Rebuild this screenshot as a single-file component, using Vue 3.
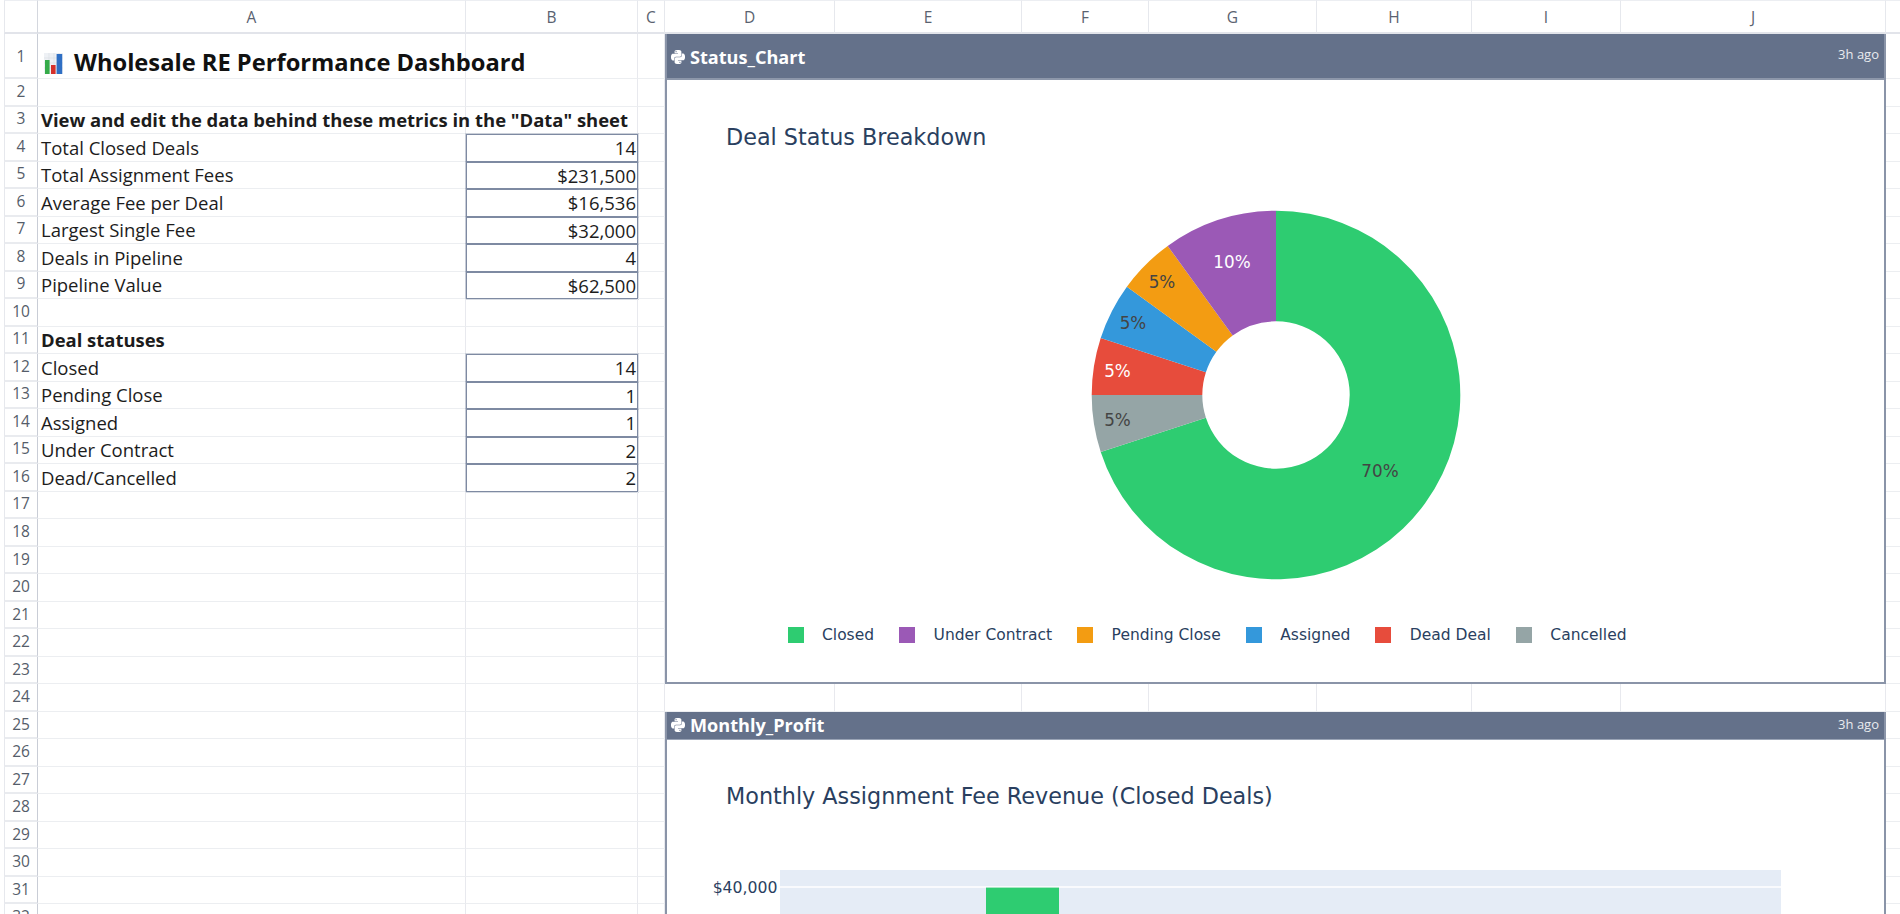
<script setup>
const columns = ['A', 'B', 'C', 'D', 'E', 'F', 'G', 'H', 'I', 'J']

const content = {
  1: { a: 'Wholesale RE Performance Dashboard', kind: 'title' },
  3: { a: 'View and edit the data behind these metrics in the "Data" sheet', kind: 'bold' },
  4: { a: 'Total Closed Deals', b: '14' },
  5: { a: 'Total Assignment Fees', b: '$231,500' },
  6: { a: 'Average Fee per Deal', b: '$16,536' },
  7: { a: 'Largest Single Fee', b: '$32,000' },
  8: { a: 'Deals in Pipeline', b: '4' },
  9: { a: 'Pipeline Value', b: '$62,500' },
  11: { a: 'Deal statuses', kind: 'bold' },
  12: { a: 'Closed', b: '14' },
  13: { a: 'Pending Close', b: '1' },
  14: { a: 'Assigned', b: '1' },
  15: { a: 'Under Contract', b: '2' },
  16: { a: 'Dead/Cancelled', b: '2' },
}

// Columns D-J are covered by the widgets except on row 24, the gap between them.
const rows = Array.from({ length: 33 }, (_, i) => ({
  n: i + 1,
  free: i + 1 === 24 ? 8 : 1,
  ...(content[i + 1] || {}),
}))

const R = 184.3
const r = 73.7
const C = 186

function point(radius, frac) {
  const t = frac * Math.PI * 2
  return `${(C + radius * Math.sin(t)).toFixed(2)} ${(C - radius * Math.cos(t)).toFixed(2)}`
}

const sliceData = [
  { v: 0.7, color: '#2ecc71' },
  { v: 0.05, color: '#95a5a6' },
  { v: 0.05, color: '#e74c3c' },
  { v: 0.05, color: '#3498db' },
  { v: 0.05, color: '#f39c12' },
  { v: 0.1, color: '#9b59b6' },
]

let acc = 0
const slices = sliceData.map((s) => {
  const a = acc
  const b = acc + s.v
  acc = b
  const large = s.v > 0.5 ? 1 : 0
  return {
    color: s.color,
    d: `M${point(R, a)} A${R} ${R} 0 ${large} 1 ${point(R, b)} L${point(r, b)} A${r} ${r} 0 ${large} 0 ${point(r, a)} Z`,
  }
})

// label positions are relative to the donut box (centre = 186,186 at page 1275,395)
const pieLabels = [
  { t: '70%', x: 290, y: 262, fill: '#444444' },
  { t: '5%', x: 27.5, y: 211, fill: '#444444' },
  { t: '5%', x: 27.5, y: 162, fill: '#ffffff' },
  { t: '5%', x: 43, y: 114, fill: '#444444' },
  { t: '5%', x: 72, y: 73, fill: '#444444' },
  { t: '10%', x: 142, y: 53, fill: '#ffffff' },
]

const legend = [
  { t: 'Closed', c: '#2ecc71' },
  { t: 'Under Contract', c: '#9b59b6' },
  { t: 'Pending Close', c: '#f39c12' },
  { t: 'Assigned', c: '#3498db' },
  { t: 'Dead Deal', c: '#e74c3c' },
  { t: 'Cancelled', c: '#95a5a6' },
]

const pythonPath = 'M14.25.18l.9.2.73.26.59.3.45.32.34.34.25.34.16.33.1.3.04.26.02.2-.01.13V8.5l-.05.63-.13.55-.21.46-.26.38-.3.31-.33.25-.35.19-.35.14-.33.1-.3.07-.26.04-.21.02H8.77l-.69.05-.59.14-.5.22-.41.27-.33.32-.27.35-.2.36-.15.37-.1.35-.07.32-.04.27-.02.21v3.06H3.17l-.21-.03-.28-.07-.32-.12-.35-.18-.36-.26-.36-.36-.35-.46-.32-.59-.28-.73-.21-.88-.14-1.05-.05-1.23.06-1.22.16-1.04.24-.87.32-.71.36-.57.4-.44.42-.33.42-.24.4-.16.36-.1.32-.05.24-.01h.16l.06.01h8.16v-.83H6.18l-.01-2.75-.02-.37.05-.34.11-.31.17-.28.25-.26.31-.23.38-.2.44-.18.51-.15.58-.12.64-.1.71-.06.77-.04.84-.02 1.27.05zm-6.3 1.98l-.23.33-.08.41.08.41.23.34.33.22.41.09.41-.09.33-.22.23-.34.08-.41-.08-.41-.23-.33-.33-.22-.41-.09-.41.09zm13.09 3.95l.28.06.32.12.35.18.36.27.36.35.35.47.32.59.28.73.21.88.14 1.04.05 1.23-.06 1.23-.16 1.04-.24.86-.32.71-.36.57-.4.45-.42.33-.42.24-.4.16-.36.09-.32.05-.24.02-.16-.01h-8.22v.82h5.84l.01 2.76.02.36-.05.34-.11.31-.17.29-.25.25-.31.24-.38.2-.44.17-.51.15-.58.13-.64.09-.71.07-.77.04-.84.01-1.27-.04-1.07-.14-.9-.2-.73-.25-.59-.3-.45-.33-.34-.34-.25-.34-.16-.33-.1-.3-.04-.25-.02-.2.01-.13v-5.34l.05-.64.13-.54.21-.46.26-.38.3-.32.33-.24.35-.2.35-.14.33-.1.3-.06.26-.04.21-.02.13-.01h5.84l.69-.05.59-.14.5-.21.41-.28.33-.32.27-.35.2-.36.15-.36.1-.35.07-.32.04-.28.02-.21V6.07h2.09l.14.01zm-6.47 14.25l-.23.33-.08.41.08.41.23.33.33.23.41.08.41-.08.33-.23.23-.33.08-.41-.08-.41-.23-.33-.33-.23-.41-.08-.41.08z'
</script>

<template>
  <div class="sheet">
    <!-- Widgets come first in the grid's placement: auto-placed cells flow around them -->
    <section class="widget widget-status">
      <header class="widget-head head-tall">
        <div class="widget-name">
          <svg class="py" viewBox="0 0 24 24" width="14" height="14"><path :d="pythonPath" fill="#fff" fill-rule="evenodd" /></svg>
          <span>Status_Chart</span>
        </div>
        <span class="ago">3h ago</span>
      </header>
      <div class="widget-body">
        <h2 class="chart-title status-title">Deal Status Breakdown</h2>
        <svg class="donut" viewBox="0 0 372 372" width="372" height="372">
          <path v-for="s in slices" :key="s.color" :d="s.d" :fill="s.color" />
          <text
            v-for="l in pieLabels"
            :key="l.x"
            :x="l.x"
            :y="l.y"
            :fill="l.fill"
            class="pie-label"
            text-anchor="middle"
            dominant-baseline="central"
          >{{ l.t }}</text>
        </svg>
        <div class="legend">
          <div v-for="l in legend" :key="l.t" class="legend-item">
            <i class="swatch" :style="{ background: l.c }"></i>
            <span>{{ l.t }}</span>
          </div>
        </div>
      </div>
    </section>

    <section class="widget widget-profit">
      <header class="widget-head head-short">
        <div class="widget-name">
          <svg class="py" viewBox="0 0 24 24" width="14" height="14"><path :d="pythonPath" fill="#fff" fill-rule="evenodd" /></svg>
          <span>Monthly_Profit</span>
        </div>
        <span class="ago">3h ago</span>
      </header>
      <div class="widget-body">
        <h2 class="chart-title profit-title">Monthly Assignment Fee Revenue (Closed Deals)</h2>
        <svg class="bars" viewBox="0 0 1216 60" width="1216" height="60">
          <rect x="113" y="0" width="1001" height="60" fill="#e5ecf6" />
          <line x1="113" x2="1114" y1="17" y2="17" stroke="#ffffff" stroke-width="1.5" />
          <rect x="319" y="17.6" width="73" height="42.4" fill="#2ecc71" />
          <text x="110.5" y="17" class="axis" text-anchor="end" dominant-baseline="central">$40,000</text>
        </svg>
      </div>
    </section>

    <!-- column header row -->
    <div class="margin"></div>
    <div class="corner"></div>
    <div v-for="c in columns" :key="c" class="col-head">{{ c }}</div>
    <div class="edge head-edge"></div>

    <!-- data rows -->
    <template v-for="row in rows" :key="row.n">
      <div class="margin"></div>
      <div class="row-head" :class="{ 'row-head-first': row.n === 1 }">{{ row.n }}</div>
      <div class="cell" :class="row.kind">
        <svg v-if="row.kind === 'title'" class="chart-emoji" viewBox="0 0 19 21" width="19" height="21">
          <rect x="0" y="0" width="19" height="21" fill="#eef1f5" />
          <path d="M0 5h19M0 10h19M0 15h19M5 0v21M10 0v21M15 0v21" stroke="#d9dde3" stroke-width="0.6" />
          <rect x="1" y="7" width="4.6" height="14" fill="#35ab4a" />
          <rect x="7" y="12" width="4.6" height="9" fill="#d5302b" />
          <rect x="12.6" y="1" width="5.6" height="20" fill="#2f6fc4" />
        </svg>
        <span>{{ row.a }}</span>
      </div>
      <div class="cell" :class="{ val: row.b }">{{ row.b }}</div>
      <div v-for="c in row.free" :key="c" class="cell"></div>
      <div class="edge"></div>
    </template>
  </div>
</template>

<style scoped>
.sheet {
  display: grid;
  grid-template-columns: 4px 34px 428px 172px 27px 170px 187px 127px 168px 155px 149px 265px 14px;
  grid-template-rows: 34px 45px repeat(32, 27.53px);
  width: 1900px;
  height: 914px;
  overflow: hidden;
  background: #fff;
  font-family: "Open Sans", "Noto Sans", sans-serif;
  color: #1c1c1c;
}

.margin {
  background: #fff;
}

.corner,
.col-head {
  display: flex;
  align-items: center;
  justify-content: center;
  border-top: 1px solid #eceef2;
  border-right: 1px solid #e6e8ed;
  border-bottom: 2px solid #e2e4ea;
  font-size: 15.5px;
  color: #5a6270;
}

.corner {
  border-left: 1px solid #e6e8ed;
  border-right: 1px solid #d4d7de;
}

.row-head {
  display: flex;
  align-items: center;
  justify-content: center;
  padding-bottom: 2px;
  border-left: 1px solid #e6e8ed;
  border-right: 1px solid #c9cdd6;
  border-bottom: 2px solid #e9ebef;
  font-size: 15.5px;
  color: #555d6a;
}

.row-head-first {
  padding-bottom: 0;
}

.cell {
  display: flex;
  align-items: center;
  min-width: 0;
  padding: 0 3px 0 3px;
  border-right: 1px solid #e8e9ee;
  border-bottom: 1px solid #eceef1;
  font-size: 18.5px;
  white-space: nowrap;
}

.edge {
  border-bottom: 1px solid #eceef1;
}

.head-edge {
  border-top: 1px solid #eceef2;
  border-bottom: 2px solid #e2e4ea;
}

.bold {
  font-weight: 700;
  font-size: 18.45px;
}

.title {
  align-items: flex-end;
  padding-left: 6px;
  padding-bottom: 0;
  gap: 11px;
  font-size: 23.7px;
  font-weight: 700;
  color: #111;
}

.chart-emoji {
  flex: none;
  margin-bottom: 4px;
}

.val {
  justify-content: flex-end;
  padding-right: 1px;
  border: 1px solid #7e8aa2;
  box-shadow: 0 0 0 1px rgba(126, 138, 162, 0.3);
}

.widget {
  display: flex;
  flex-direction: column;
  z-index: 1;
  min-height: 0;
  overflow: hidden;
  background: #fff;
  border-left: 2px solid #8a94a8;
  border-right: 2px solid #8a94a8;
}

.widget-status {
  grid-row: 2 / 25;
  grid-column: 6 / 13;
  border-bottom: 2px solid #8a94a8;
}

.widget-profit {
  grid-row: 26 / 35;
  grid-column: 6 / 13;
}

.widget-head {
  display: flex;
  flex: none;
  box-sizing: border-box;
  justify-content: space-between;
  margin: 0 -2px;
  padding: 0 7px 0 6px;
  background: #64718a;
  color: #fff;
}

.head-tall {
  height: 46px;
  align-items: flex-start;
  padding-top: 12px;
  border-bottom: 2px solid #8d97aa;
}

.head-short {
  height: 28px;
  align-items: center;
  border-bottom: 1px solid #9aa4b6;
}

.widget-name {
  display: flex;
  align-items: center;
  gap: 5px;
  font-size: 18.1px;
  font-weight: 700;
  line-height: 22px;
}

.py {
  flex: none;
}

.ago {
  margin-top: -2px;
  font-size: 13px;
  line-height: 20px;
  color: #e9ebef;
}

.widget-body {
  display: flex;
  flex: 1;
  flex-direction: column;
  min-height: 0;
}

.chart-title {
  flex: none;
  margin: 0 0 0 59px;
  font-family: "DejaVu Sans", Verdana, sans-serif;
  font-size: 22.3px;
  font-weight: 400;
  line-height: 28px;
  color: #2a3f5f;
}

.status-title {
  margin-top: 43px;
}

.profit-title {
  margin-top: 42px;
}

.donut {
  display: block;
  flex: none;
  margin: 58px auto 0;
}

.pie-label {
  font-family: "DejaVu Sans", Verdana, sans-serif;
  font-size: 16.8px;
}

.legend {
  display: flex;
  flex: none;
  gap: 25px;
  height: 20px;
  margin: 44px 0 0 120.5px;
  font-family: "DejaVu Sans", Verdana, sans-serif;
  font-size: 15.5px;
  color: #2a3f5f;
}

.legend-item {
  display: flex;
  align-items: center;
  gap: 18.5px;
  white-space: nowrap;
}

.swatch {
  display: block;
  flex: none;
  width: 16px;
  height: 16px;
}

.bars {
  display: block;
  flex: none;
  margin-top: 60px;
}

.axis {
  font-family: "DejaVu Sans", Verdana, sans-serif;
  font-size: 15.7px;
  fill: #2a3f5f;
}
</style>

<style>
html,
body {
  margin: 0;
  overflow: hidden;
  background: #fff;
}
</style>
